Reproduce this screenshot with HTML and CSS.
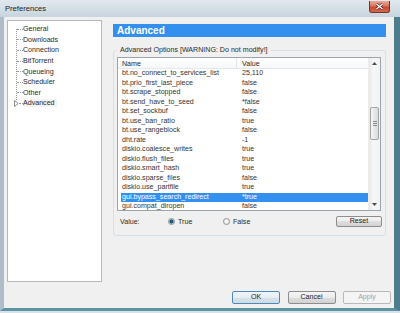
FILE: index.html
```html
<!DOCTYPE html>
<html lang="en">
<head>
  <meta charset="UTF-8">
  <title>Preferences</title>
  <link rel="stylesheet" href="styles.css">
</head>
<body>
  <div class="window">
    <div class="titlebar">
      <span class="title">Preferences</span>
      <span class="close">
        <svg width="9" height="7" viewBox="0 0 9 7"><path d="M1.5 1 L7.5 6 M7.5 1 L1.5 6" stroke="#4a1a14" stroke-width="2.6"/><path d="M1.5 1 L7.5 6 M7.5 1 L1.5 6" stroke="#fff" stroke-width="1.4"/></svg>
      </span>
    </div>
    <div class="client">
      <div class="main">
        <ul class="tree">
          <li><span class="stub"></span>General</li>
          <li><span class="stub"></span>Downloads</li>
          <li><span class="stub"></span>Connection</li>
          <li><span class="stub"></span>BitTorrent</li>
          <li><span class="stub"></span>Queueing</li>
          <li><span class="stub"></span>Scheduler</li>
          <li><span class="stub"></span>Other</li>
          <li class="collapsed">
            <svg class="expander" width="5" height="7" viewBox="0 0 5 7"><path d="M0.5 0.5 L4.2 3.5 L0.5 6.5 Z" fill="#fff" stroke="#8c8c8c" stroke-width="1"/></svg><span class="stub short"></span><span class="current">Advanced</span>
          </li>
        </ul>
        <div class="page">
          <div class="page-title">Advanced</div>
          <fieldset class="group">
            <legend>Advanced Options [WARNING: Do not modify!]</legend>
            <div class="listview">
              <div class="lv-main">
                <div class="lv-head"><span class="col-name">Name</span><span class="col-value">Value</span></div>
                <div class="lv-body">
                  <div class="row"><span class="col-name">bt.no_connect_to_services_list</span><span class="col-value">25,110</span></div>
                  <div class="row"><span class="col-name">bt.prio_first_last_piece</span><span class="col-value">false</span></div>
                  <div class="row"><span class="col-name">bt.scrape_stopped</span><span class="col-value">false</span></div>
                  <div class="row"><span class="col-name">bt.send_have_to_seed</span><span class="col-value">*false</span></div>
                  <div class="row"><span class="col-name">bt.set_sockbuf</span><span class="col-value">false</span></div>
                  <div class="row"><span class="col-name">bt.use_ban_ratio</span><span class="col-value">true</span></div>
                  <div class="row"><span class="col-name">bt.use_rangeblock</span><span class="col-value">false</span></div>
                  <div class="row"><span class="col-name">dht.rate</span><span class="col-value">-1</span></div>
                  <div class="row"><span class="col-name">diskio.coalesce_writes</span><span class="col-value">true</span></div>
                  <div class="row"><span class="col-name">diskio.flush_files</span><span class="col-value">true</span></div>
                  <div class="row"><span class="col-name">diskio.smart_hash</span><span class="col-value">true</span></div>
                  <div class="row"><span class="col-name">diskio.sparse_files</span><span class="col-value">false</span></div>
                  <div class="row"><span class="col-name">diskio.use_partfile</span><span class="col-value">true</span></div>
                  <div class="row selected"><span class="col-name">gui.bypass_search_redirect</span><span class="col-value">*true</span></div>
                  <div class="row"><span class="col-name">gui.compat_diropen</span><span class="col-value">false</span></div>
                </div>
              </div>
              <div class="scrollbar">
                <div class="sb-btn"><svg width="5" height="3" viewBox="0 0 5 3"><path d="M0 3 L2.5 0 L5 3 Z" fill="#4a4a4a"/></svg></div>
                <div class="sb-track">
                  <div class="sb-thumb"><span class="grip"></span></div>
                </div>
                <div class="sb-btn"><svg width="5" height="3" viewBox="0 0 5 3"><path d="M0 0 L2.5 3 L5 0 Z" fill="#4a4a4a"/></svg></div>
              </div>
            </div>
            <div class="value-row">
              <span class="value-label">Value:</span>
              <span class="radio radio-true"><span class="dot checked"></span>True</span>
              <span class="radio"><span class="dot"></span>False</span>
              <button class="btn reset">Reset</button>
            </div>
          </fieldset>
        </div>
      </div>
      <div class="buttons">
        <button class="btn big default">OK</button>
        <button class="btn big">Cancel</button>
        <button class="btn big disabled">Apply</button>
      </div>
    </div>
  </div>
</body>
</html>
```

FILE: styles.css
```css
* {
  box-sizing: border-box;
}
body {
  margin: 0;
  background: #d9e2e8;
  font-family: "Liberation Sans", Arial, sans-serif;
  font-size: 7.1px;
  color: #2a2a2a;
}
.window {
  width: 400px;
  height: 313px;
  display: flex;
  flex-direction: column;
}
.titlebar {
  height: 17px;
  flex: none;
  display: flex;
  align-items: flex-start;
  padding-left: 5px;
  background: linear-gradient(to bottom, #e1e9ef, #d2dde5 60%, #c7d4de);
}
.title {
  font-size: 7.6px;
  line-height: 18px;
  color: #1b1b1b;
}
.close {
  margin-left: auto;
  margin-right: 10px;
  margin-top: 1px;
  width: 21px;
  height: 12px;
  border: 1px solid #7a3024;
  border-top: none;
  border-radius: 0 0 3px 3px;
  background: linear-gradient(to bottom, #eaa896, #da7762 45%, #c54a32 55%, #d36a50);
  display: flex;
  align-items: center;
  justify-content: center;
}
.client {
  flex: 1;
  display: flex;
  flex-direction: column;
  margin-bottom: 2px;
  padding: 3px 3px 0 3px;
  background: #f0f0f0;
  border-left: 4px solid #aebdc9;
  border-right: 6px solid #4d7d8d;
  border-bottom: 3px solid #5a93a4;
}
.main {
  display: flex;
  gap: 11px;
  height: 262px;
  flex: none;
}

/* tree */
.tree {
  width: 95px;
  margin: 0;
  padding: 3px 0 0 0;
  list-style: none;
  background-color: #fff;
  border: 1px solid #b4b9bd;
  background-image: repeating-linear-gradient(to bottom, #9a9a9a 0 1px, transparent 1px 2px);
  background-size: 1px 74px;
  background-position: 8px 8px;
  background-repeat: no-repeat;
}
.tree li {
  height: 10.6px;
  display: flex;
  align-items: center;
  padding-left: 9px;
  white-space: nowrap;
  color: #2a2a2a;
}
.stub {
  width: 6px;
  border-top: 1px dotted #9a9a9a;
}
.tree li.collapsed {
  padding-left: 6px;
}
.expander {
  display: block;
  flex: none;
  background: #fff;
}
.stub.short {
  width: 4px;
}
.current {
  background: #f3f3f3;
  padding-right: 2px;
}

/* right page */
.page {
  width: 273px;
}
.page-title {
  margin-top: 4px;
  height: 13px;
  line-height: 13px;
  padding-left: 4px;
  background: #3490ee;
  color: #fff;
  font-size: 10px;
  font-weight: bold;
}
.group {
  margin: 8px 0 0 0;
  padding: 2px 4px 8px 3px;
  border: 1px solid #d5dfe5;
  border-radius: 3px;
  min-width: 0;
}
.group legend {
  padding: 0 3px;
  line-height: 10px;
  color: #2a2a2a;
}

/* list view */
.listview {
  height: 154px;
  display: flex;
  background: #fff;
  border: 1px solid #9ca5ae;
}
.lv-main {
  flex: 1;
  min-width: 0;
  overflow: hidden;
}
.lv-head {
  height: 11px;
  line-height: 12px;
  display: flex;
  border-bottom: 1px solid #e5e8ec;
  background: linear-gradient(to bottom, #fff, #f6f7f9);
}
.lv-head .col-name {
  width: 119px;
  padding-left: 4px;
  border-right: 1px solid #e2e5e9;
}
.col-name {
  flex: none;
  white-space: nowrap;
}
.col-value {
  padding-left: 5px;
  white-space: nowrap;
}
.lv-body {
  height: 141px;
  overflow: hidden;
}
.row {
  height: 9.5px;
  line-height: 9.5px;
  display: flex;
  margin-left: 3px;
  color: #333;
}
.row .col-name {
  width: 116px;
  padding-left: 1px;
}
.row.selected {
  background: #3490ee;
  color: #fff;
}

/* scroll bar */
.scrollbar {
  width: 12px;
  flex: none;
  display: flex;
  flex-direction: column;
  border-left: 1px solid #ececec;
  background: linear-gradient(to right, #e8e8e8, #f7f7f7 40%, #f2f2f2);
}
.sb-btn {
  height: 11px;
  display: flex;
  align-items: center;
  justify-content: center;
}
.sb-track {
  flex: 1;
  padding-top: 38px;
}
.sb-thumb {
  height: 33px;
  margin: 0 1px;
  border: 1px solid #a3a3a3;
  border-radius: 2px;
  background: linear-gradient(to right, #f6f6f6, #e6e6e6 50%, #dcdcdc);
  display: flex;
  align-items: center;
  justify-content: center;
}
.grip {
  width: 4px;
  height: 5px;
  background: repeating-linear-gradient(to bottom, #8a8a8a 0 1px, transparent 1px 2px);
}

/* value row */
.value-row {
  display: flex;
  align-items: center;
  height: 11px;
  margin-top: 5px;
}
.value-label {
  width: 51px;
  padding-left: 3px;
}
.radio {
  display: flex;
  align-items: center;
}
.radio-true {
  width: 55px;
}
.dot {
  width: 7px;
  height: 7px;
  margin-right: 3px;
  border-radius: 50%;
  border: 1px solid #8e9091;
  background: radial-gradient(circle at 50% 40%, #fff, #e2e2e2);
}
.dot.checked {
  background: radial-gradient(circle, #1d5a7c 0 1.4px, #5e97b5 2px, #e8eef2 2.5px);
}
.btn {
  font-family: inherit;
  font-size: 7.1px;
  color: #222;
  padding: 0;
  border: 1px solid #8d8d8d;
  border-radius: 2px;
  background: linear-gradient(to bottom, #f4f4f4 0, #ececec 50%, #dedede 50%, #d2d2d2 100%);
  text-align: center;
}
.reset {
  width: 46px;
  height: 11px;
  line-height: 9px;
  margin-left: auto;
  margin-right: -1px;
}

/* dialog buttons */
.buttons {
  display: flex;
  justify-content: flex-end;
  gap: 7.5px;
  margin-top: 9px;
}
.btn.big {
  width: 48px;
  height: 13px;
  line-height: 11px;
}
.btn.default {
  border-color: #4d8ab8;
  background: linear-gradient(to bottom, #eef4f8 0, #e6eef4 50%, #d6e2ea 50%, #cfdce6 100%);
}
.btn.disabled {
  border-color: #b9b9b9;
  background: #f4f4f4;
  color: #a3a3a3;
}
```
